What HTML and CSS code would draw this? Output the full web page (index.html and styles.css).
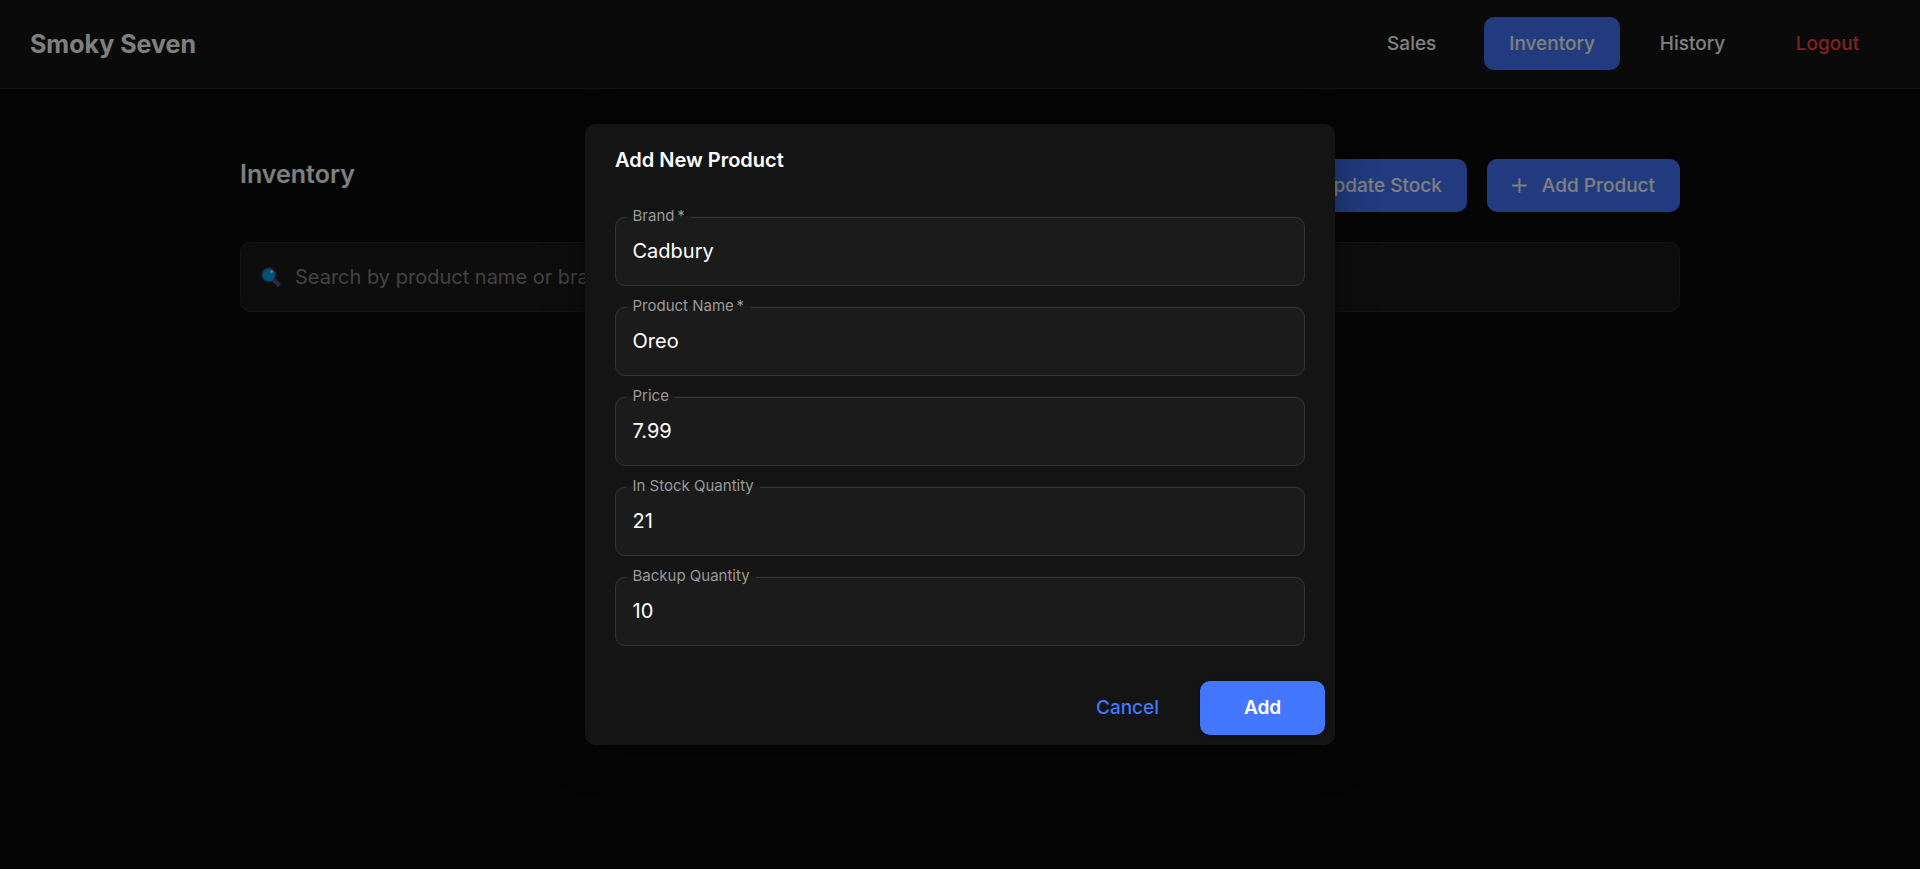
FILE: index.html
```
<!DOCTYPE html>
<html lang="en">
<head>
<meta charset="utf-8">
<title>Smoky Seven</title>
<link rel="stylesheet" href="styles.css">
</head>
<body>
<div class="app">
  <header class="topbar">
    <div class="brand">Smoky Seven</div>
    <nav class="nav">
      <a class="btn">Sales</a>
      <a class="btn filled">Inventory</a>
      <a class="btn">History</a>
      <a class="btn danger">Logout</a>
    </nav>
  </header>
  <main class="container">
    <div class="page-head">
      <h1 class="page-title">Inventory</h1>
      <div class="actions">
        <a class="btn filled">Update Stock</a>
        <a class="btn filled"><svg class="plus" viewBox="0 0 24 24"><path d="M19 12.9h-6.1V19h-1.8v-6.1H5v-1.8h6.1V5h1.8v6.1H19z" fill="currentColor"/></svg>Add Product</a>
      </div>
    </div>
    <div class="search">
      <svg class="lens" viewBox="0 0 20 20"><path d="M13.6 13.9l3.7 3.5" stroke="#5d548c" stroke-width="4.2" stroke-linecap="round"/><circle cx="7.9" cy="7.9" r="7" fill="#00a6ed" stroke="#533566" stroke-width="1.3"/><circle cx="10.7" cy="4.8" r="1.2" fill="#fff"/></svg>
      <span>Search by product name or brand...</span>
    </div>
  </main>
</div>
<div class="backdrop">
  <section class="dialog">
    <h2 class="dialog-title">Add New Product</h2>
    <div class="fields">
      <div class="field"><fieldset><legend>Brand&#8201;*</legend></fieldset><span>Cadbury</span></div>
      <div class="field"><fieldset><legend>Product Name&#8201;*</legend></fieldset><span>Oreo</span></div>
      <div class="field"><fieldset><legend>Price</legend></fieldset><span>7.99</span></div>
      <div class="field"><fieldset><legend>In Stock Quantity</legend></fieldset><span>21</span></div>
      <div class="field"><fieldset><legend>Backup Quantity</legend></fieldset><span>10</span></div>
    </div>
    <div class="dialog-actions">
      <a class="btn cancel">Cancel</a>
      <a class="btn add">Add</a>
    </div>
  </section>
</div>
</body>
</html>
```
FILE: styles.css
```
* { box-sizing: border-box; }
body {
  margin: 0;
  height: 869px;
  overflow: hidden;
  background: #0a0a0a;
  color: #fff;
  font: 20px/30px Inter, sans-serif;
}
.topbar {
  display: flex;
  align-items: center;
  justify-content: space-between;
  height: 89px;
  padding: 0 30px 1px;
  background: #141414;
  border-bottom: 1px solid #262626;
}
.brand { padding-top: 1px; font-size: 25px; font-weight: 700; }
.nav { display: flex; gap: 10px; }
.nav .btn { padding-top: 1px; }
.btn {
  display: flex;
  align-items: center;
  justify-content: center;
  min-width: 125px;
  height: 53px;
  padding: 0 25px;
  border-radius: 10px;
  font-size: 19px;
  font-weight: 500;
}
.filled { background: #4477ff; }
.danger { color: #ff4444; }
.container { width: 1440px; margin: 0 auto; padding-top: 70px; }
.page-head { display: flex; justify-content: space-between; align-items: flex-start; }
.page-title { margin: 0; font-size: 25px; line-height: 30px; font-weight: 600; }
.actions { display: flex; gap: 20px; }
.plus { width: 25px; height: 25px; margin: 0 10px 0 -5px; }
.search {
  display: flex;
  align-items: center;
  gap: 14px;
  height: 70px;
  margin-top: 30px;
  padding: 0 20px;
  border: 1px solid #262626;
  border-radius: 10px;
  background: #1b1b1b;
  color: #848484;
}
.lens { width: 20px; height: 20px; fill: none; }
.backdrop {
  position: absolute;
  inset: 0;
  display: flex;
  align-items: center;
  justify-content: center;
  background: rgba(0, 0, 0, .5);
}
.dialog {
  width: 750px;
  height: 621px;
  border-radius: 10px;
  background: #141414;
  box-shadow: 0 10px 40px rgba(0, 0, 0, .4);
}
.dialog-title { margin: 0; padding: 20px 30px; font-size: 20px; line-height: 32px; font-weight: 600; }
.fields { display: flex; flex-direction: column; gap: 20px; padding: 20px 30px 0; }
.field {
  position: relative;
  height: 70px;
  padding: 20px 17.5px 18px;
  border-radius: 10px;
  background: #1b1b1b;
}
.field fieldset {
  position: absolute;
  inset: -10px 0 0;
  margin: 0;
  padding: 0 10px;
  border: 1px solid #333;
  border-radius: 10px;
}
.field legend {
  padding: 0 6.5px 3px;
  font-size: 15px;
  line-height: 20px;
  color: #999;
}
.dialog-actions { display: flex; justify-content: flex-end; gap: 10px; padding: 35px 10px 10px; }
.dialog-actions .btn { height: 54px; }
.cancel { color: #4477ff; }
.add { background: #4477ff; font-weight: 600; box-shadow: 0 1px 4px rgba(0,0,0,.4); }
```
